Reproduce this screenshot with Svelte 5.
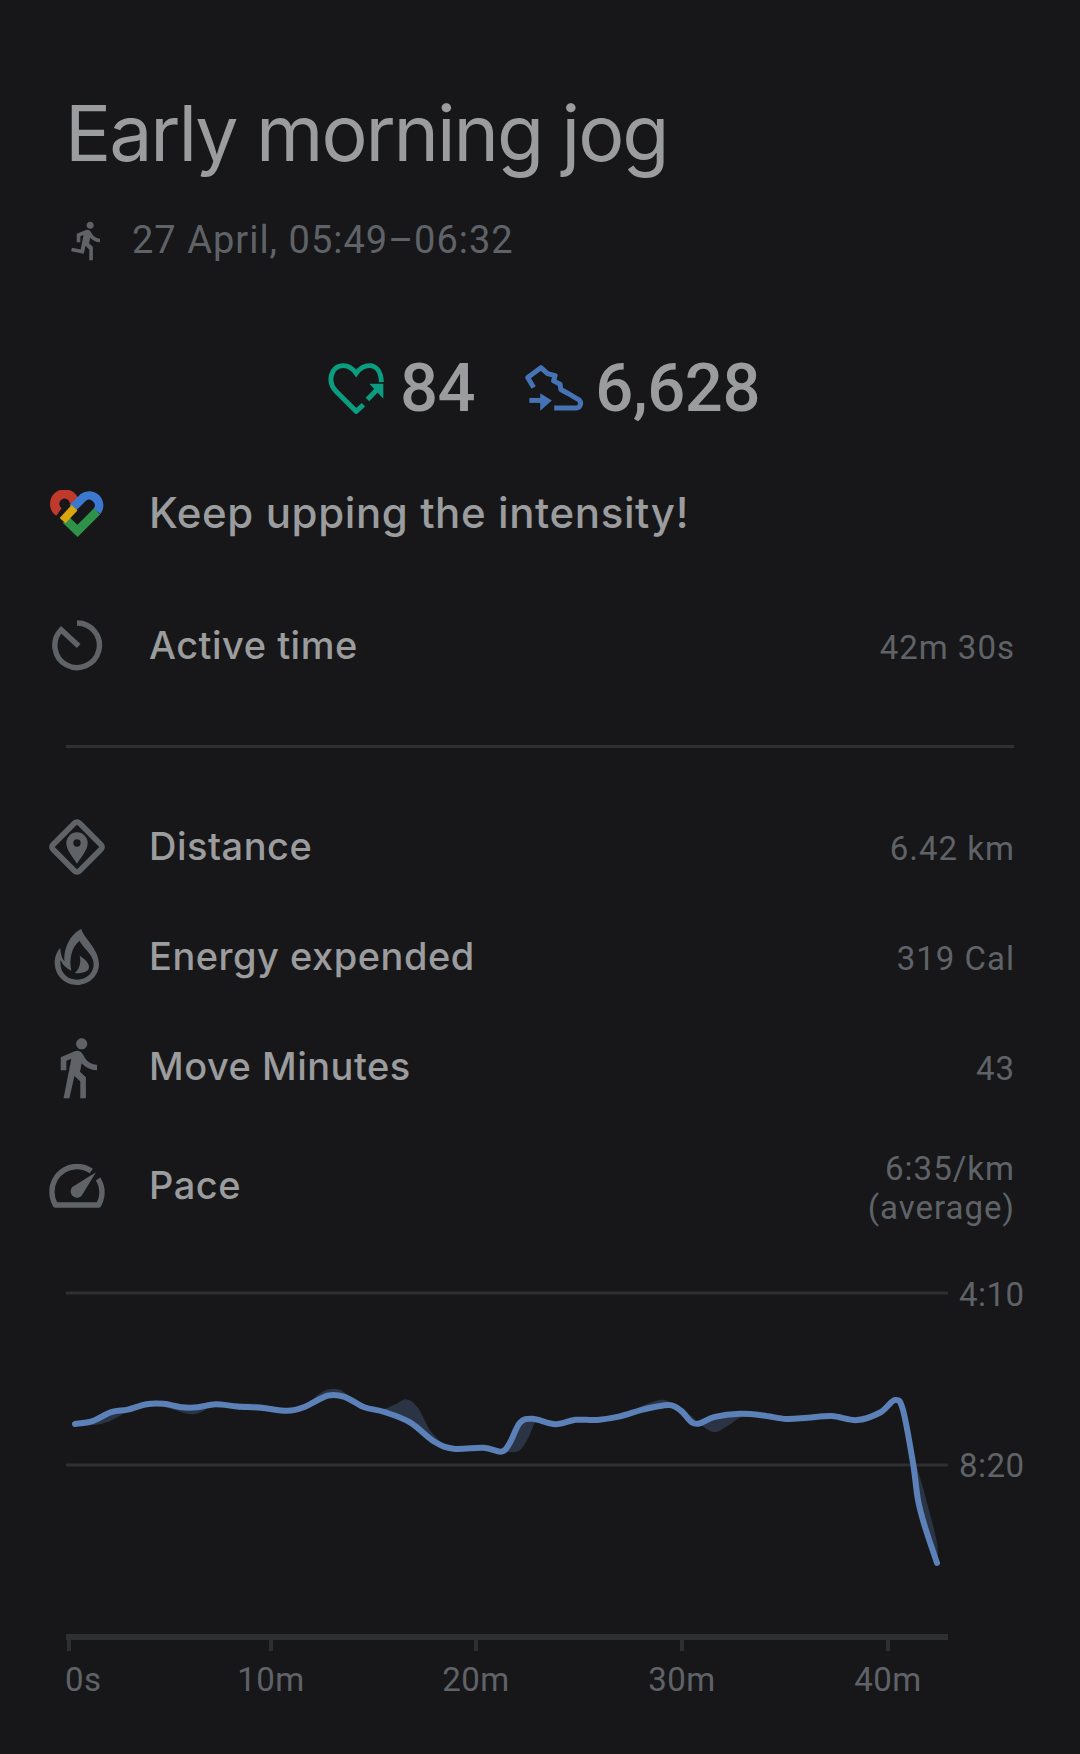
<script>
    const line = [[75,1424],[92,1423],[112,1410],[127,1411],[147,1403],[163,1403],[183,1408],[197,1408],[215,1403],[237,1407],[260,1407],[290,1412],[302,1409],[330,1393],[343,1395],[365,1409],[383,1411],[410,1420],[437,1445],[450,1450],[487,1446],[503,1454],[509,1446],[520,1419],[530,1417],[557,1427],[575,1418],[597,1421],[620,1417],[643,1409],[672,1403],[681,1410],[692,1424],[698,1425],[713,1416],[740,1413],[763,1415],[787,1420],[807,1418],[832,1414],[857,1423],[882,1413],[895,1400],[903,1410],[913,1463],[918,1500],[925,1527],[937,1563]];
    const raw = [[75,1424],[92,1426],[110,1422],[122,1414],[135,1410],[147,1407],[160,1405],[175,1410],[190,1415],[200,1414],[215,1401],[237,1404],[260,1403],[290,1411],[300,1410],[325,1388],[340,1388],[350,1398],[365,1409],[383,1410],[395,1405],[407,1397],[418,1405],[430,1433],[445,1446],[460,1449],[487,1446],[503,1452],[520,1453],[528,1440],[537,1415],[545,1420],[557,1427],[575,1418],[597,1421],[620,1417],[643,1405],[663,1398],[672,1403],[680,1412],[692,1415],[700,1425],[715,1435],[728,1426],[740,1416],[763,1415],[787,1420],[807,1418],[832,1416],[857,1423],[882,1415],[896,1400],[903,1410],[917,1467],[925,1495],[937,1543],[937,1563]];

    // light averaging so the corners go soft, the drop at the end stays as drawn
    const soften = (pts) => pts.map((p, i) => {
        if (i === 0 || i > pts.length - 7) return p;
        const a = pts[i - 1];
        const b = pts[i + 1];
        return [+(a[0] * 0.15 + p[0] * 0.7 + b[0] * 0.15).toFixed(1), +(a[1] * 0.15 + p[1] * 0.7 + b[1] * 0.15).toFixed(1)];
    });

    // catmull-rom to bezier
    const smooth = (pts) => {
        let d = '';
        for (let i = 0; i < pts.length - 1; i++) {
            const p0 = pts[i - 1] || pts[i];
            const p1 = pts[i];
            const p2 = pts[i + 1];
            const p3 = pts[i + 2] || p2;
            const c1 = [p1[0] + (p2[0] - p0[0]) / 6, p1[1] + (p2[1] - p0[1]) / 6];
            const c2 = [p2[0] - (p3[0] - p1[0]) / 6, p2[1] - (p3[1] - p1[1]) / 6];
            d += `C${c1[0].toFixed(1)} ${c1[1].toFixed(1)} ${c2[0].toFixed(1)} ${c2[1].toFixed(1)} ${p2[0]} ${p2[1]}`;
        }
        return d;
    };

    const softLine = soften(line);
    const softRaw = soften(raw);
    const linePath = `M${softLine[0][0]} ${softLine[0][1]}` + smooth(softLine);
    const areaPath = `M${softRaw[0][0]} ${softRaw[0][1]}` + smooth(softRaw) + `L${softLine[softLine.length - 1].join(' ')}` + smooth([...softLine].reverse()) + 'Z';

    const ticks = [
        { x: 69, label: '0s', left: true },
        { x: 271, label: '10m' },
        { x: 476, label: '20m' },
        { x: 682, label: '30m' },
        { x: 888, label: '40m' }
    ];

    const metrics = [
        { icon: 'diamond', label: 'Distance', value: '6.42 km' },
        { icon: 'flame', label: 'Energy expended', value: '319 Cal' },
        { icon: 'walk', label: 'Move Minutes', value: '43' }
    ];
</script>

{#snippet icon(name)}
    {#if name === 'diamond'}
        <svg class="ic" width="60" height="60" viewBox="50 52 180 180">
            <rect x="84" y="86" width="112" height="112" rx="10" transform="rotate(45 140 142)" fill="none" stroke="#5f6368" stroke-width="17" />
            <path fill-rule="evenodd" d="M140 192C128 172 108 152 108 130a32 32 0 0 1 64 0C172 152 152 172 140 192ZM140 119a11 11 0 1 0 0 22a11 11 0 0 0 0-22Z" fill="#5f6368" />
        </svg>
    {:else if name === 'flame'}
        <svg class="ic" width="46" height="58" viewBox="73 388 138 172">
            <path fill-rule="evenodd" d="M155 390C160 415 208 450 208 495C208 530 178 558 142 558C105 558 75 530 75 490C75 475 82 455 92 447C93 465 97 480 105 487C100 455 120 405 155 390ZM150 425C125 445 118 480 125 515C112 510 100 500 93 484C92 486 92 488 92 490C92 525 115 542 142 542C170 542 192 522 192 495C192 465 157 445 150 425Z" fill="#5f6368" />
            <path d="M150 470C165 480 178 490 178 505C178 515 165 525 135 522C150 510 155 490 150 470Z" fill="#5f6368" />
        </svg>
    {:else if name === 'walk'}
        <svg class="ic" width="67" height="67" viewBox="0 0 24 24">
            <path d="M13.5 5.5c1.1 0 2-.9 2-2s-.9-2-2-2-2 .9-2 2 .9 2 2 2zM9.8 8.9L7 23h2.1l1.8-8 2.1 2v6h2v-7.5l-2.1-2 .6-3C14.8 12 16.8 13 19 13v-2c-1.9 0-3.5-1-4.3-2.4l-1-1.6c-.4-.6-1-1-1.7-1-.3 0-.5.1-.8.1L6 8.3V13h2V9.6l1.8-.7z" fill="#5f6368" />
        </svg>
    {:else if name === 'gauge'}
        <svg class="ic" width="56" height="44" viewBox="57 429 168 132">
            <path d="M184 450A75 75 0 0 0 66 515C66 528 70 540 76 552H206C212 540 216 528 216 515C216 500 212 486 204 474" fill="none" stroke="#5f6368" stroke-width="16" stroke-linejoin="round" />
            <path d="M198 454L155 524A19 19 0 1 1 127 498Z" fill="#5f6368" />
        </svg>
    {/if}
{/snippet}

<main class="page">
    <h1 class="title">Early morning jog</h1>
    <div class="subtitle">
        <svg class="run" width="43" height="43" viewBox="0 0 24 24">
            <path d="M13.49 5.48c1.1 0 2-.9 2-2s-.9-2-2-2-2 .9-2 2 .9 2 2 2zm-3.6 13.9l1-4.4 2.1 2v6h2v-7.5l-2.1-2 .6-3c1.3 1.5 3.3 2.5 5.5 2.5v-2c-1.9 0-3.5-1-4.3-2.4l-1-1.6c-.4-.6-1-1-1.7-1-.3 0-.5.1-.8.1l-5.2 2.2v4.7h2v-3.4l1.8-.7-1.6 8.1-4.9-1-.4 2 7 1.4z" fill="#5f6368" />
        </svg>
        <span>27 April, 05:49–06:32</span>
    </div>

    <div class="stats">
        <svg width="58" height="52" viewBox="50 70 175 155">
            <path d="M160 198L138 218L78 158C50 130 60 80 100 80C120 80 130 92 138 103C146 92 156 80 178 80C200 80 213 100 214 130" fill="none" stroke="#0b9d7f" stroke-width="15" />
            <path d="M172 182L205 148" fill="none" stroke="#0b9d7f" stroke-width="15" />
            <path d="M178 135H220V180Z" fill="#0b9d7f" />
        </svg>
        <span class="stat-num">84</span>
        <svg class="steps" width="62" height="48" viewBox="640 75 185 145">
            <path d="M668 146L650 116L690 86L710 104L733 110L728 126L748 136L750 152L772 164L806 184C815 196 806 208 796 208H730" fill="none" stroke="#4673b5" stroke-width="15" stroke-linejoin="round" />
            <path d="M655 185H695" fill="none" stroke="#4673b5" stroke-width="15" />
            <path d="M688 163L723 185L688 216Z" fill="#4673b5" />
        </svg>
        <span class="stat-num steps-num">6,628</span>
    </div>

    <div class="row insight">
        <div class="icon-cell">
            <svg class="ic" width="55" height="48" viewBox="57 65 166 144">
                <path d="M84 131A30 30 0 1 1 131 105" fill="none" stroke="#c0392d" stroke-width="28" />
                <path d="M125 119L157 87A30 30 0 0 1 199 129" fill="none" stroke="#3b78d0" stroke-width="26" />
                <path d="M105 155L140 188L199 129" fill="none" stroke="#2e9248" stroke-width="26" />
                <path d="M95 157L131 118" fill="none" stroke="#dba50f" stroke-width="24" />
            </svg>
        </div>
        <span class="label big">Keep upping the intensity!</span>
    </div>

    <div class="row active">
        <div class="icon-cell">
            <svg class="ic" width="54" height="54" viewBox="60 450 160 160">
                <path d="M140 462A66 66 0 1 1 93 482L145 530" fill="none" stroke="#5f6368" stroke-width="16" />
            </svg>
        </div>
        <span class="label">Active time</span>
        <span class="value">42m 30s</span>
    </div>

    <hr class="divider" />

    <div class="metrics">
        {#each metrics as m}
            <div class="row">
                <div class="icon-cell">{@render icon(m.icon)}</div>
                <span class="label">{m.label}</span>
                <span class="value">{m.value}</span>
            </div>
        {/each}
    </div>

    <div class="row pace">
        <div class="icon-cell">{@render icon('gauge')}</div>
        <span class="label">Pace</span>
        <span class="value">6:35/km<br />(average)</span>
    </div>

    <svg class="chart" width="1080" height="484" viewBox="0 1270 1080 484">
        <line x1="66" x2="948" y1="1293" y2="1293" class="grid" />
        <line x1="66" x2="948" y1="1465" y2="1465" class="grid" />
        <text x="959" y="1306" class="axis">4:10</text>
        <text x="959" y="1477" class="axis">8:20</text>

        <path d={areaPath} fill="#2b3445" />
        <path d={linePath} fill="none" stroke="#5c80b8" stroke-width="6" stroke-linecap="round" stroke-linejoin="round" />

        <rect x="66" y="1634" width="882" height="6" fill="#2e2f31" />
        {#each ticks as t}
            <rect x={t.x - 2} y="1637" width="4" height="14" fill="#2e2f31" />
            <text x={t.left ? 65 : t.x} y="1691" class="axis tick" text-anchor={t.left ? 'start' : 'middle'}>{t.label}</text>
        {/each}
    </svg>
</main>

<style>
    :global(body) {
        background: #171719;
    }

    .page {
        width: 1080px;
        height: 1754px;
        background: #171719;
        overflow: hidden;
        padding-top: 85px;
        box-sizing: border-box;
        font-family: Inter, "Liberation Sans", sans-serif;
    }

    .title {
        margin: 0 0 0 65px;
        font-size: 77px;
        line-height: 96px;
        font-weight: 400;
        color: #9b9c9e;
        letter-spacing: -2.1px;
    }

    .subtitle {
        display: flex;
        align-items: center;
        margin: 34px 0 0 66px;
        height: 50px;
        font-family: Roboto, sans-serif;
        font-size: 38px;
        letter-spacing: 1px;
        color: #5f6368;
    }

    .run {
        flex: none;
    }

    .subtitle span {
        margin-left: 23px;
    }

    .stats {
        display: flex;
        align-items: center;
        height: 80px;
        margin-top: 83px;
        padding-left: 327px;
    }

    .stat-num {
        font-family: Roboto, sans-serif;
        font-size: 67px;
        font-weight: 500;
        color: #9b9c9e;
        margin-left: 15px;
        letter-spacing: -0.5px;
    }

    .steps {
        margin-left: 49px;
    }

    .steps-num {
        margin-left: 9px;
    }

    .row {
        display: flex;
        align-items: center;
        height: 110px;
        padding: 0 66px 0 50px;
    }

    .icon-cell {
        flex: none;
        width: 54px;
        margin-right: 45px;
        display: flex;
        justify-content: center;
    }

    .ic {
        flex: none;
    }

    .label {
        flex: 1;
        font-size: 38px;
        font-weight: 500;
        letter-spacing: 0.5px;
        color: #9b9c9e;
        padding-bottom: 3px;
    }

    .big {
        font-size: 42px;
        letter-spacing: 0.6px;
    }

    .value {
        font-family: Roboto, sans-serif;
        font-size: 33px;
        line-height: 39px;
        letter-spacing: 1px;
        margin-right: -1px;
        color: #5f6368;
        text-align: right;
        padding-top: 3px;
    }

    .insight {
        height: 100px;
        margin-top: 36px;
    }

    .active {
        margin-top: 27px;
    }

    .divider {
        height: 3px;
        margin: 44px 66px 44px;
        border: 0;
        background: #2e2f31;
    }

    .pace {
        height: 100px;
        margin-top: 14px;
    }

    .chart {
        display: block;
        margin-top: 34px;
    }

    .grid {
        stroke: #2e2f31;
        stroke-width: 3;
    }

    .axis {
        font-family: Roboto, sans-serif;
        font-size: 33px;
        letter-spacing: 0.5px;
        fill: #5f6368;
    }
</style>
